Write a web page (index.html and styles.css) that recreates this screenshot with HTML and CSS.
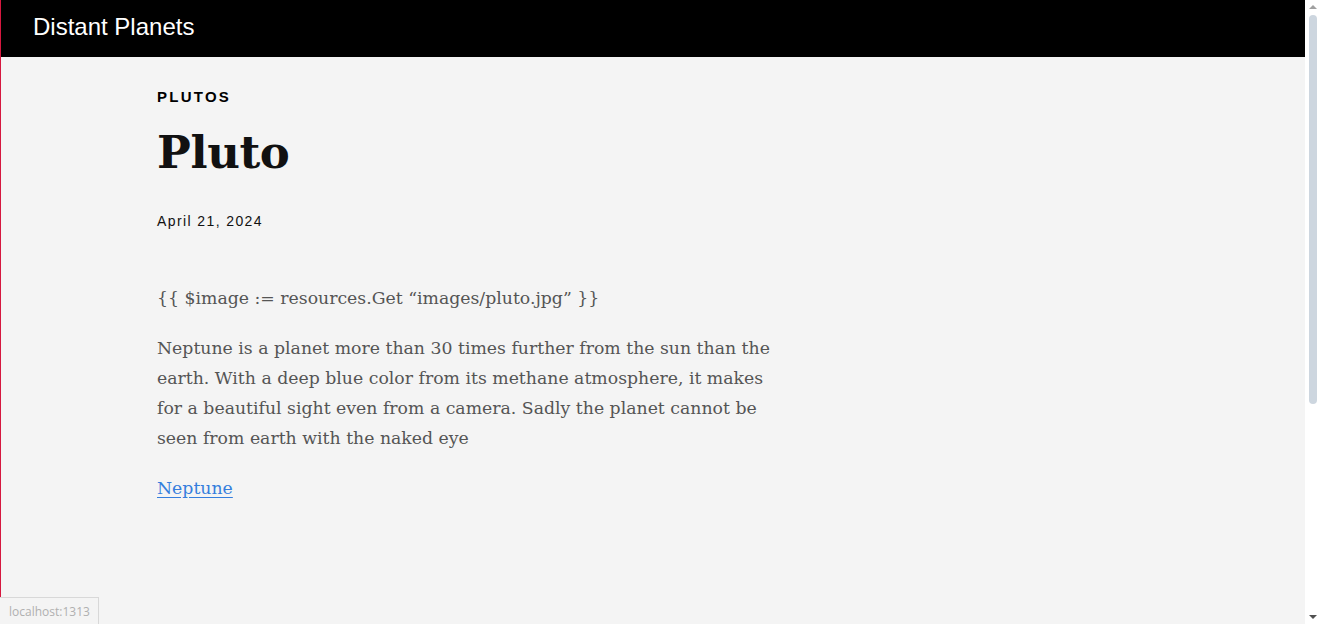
FILE: index.html
```html
<!DOCTYPE html>
<html lang="en">
<head>
<meta charset="utf-8">
<title>Pluto | Distant Planets</title>
<link rel="stylesheet" href="styles.css">
</head>
<body>
<div class="window">
  <div class="page">
    <header class="site-header">
      <a class="site-title" href="#">Distant Planets</a>
    </header>
    <main class="main">
      <article class="article">
        <div class="article-head">
          <p class="kicker">PLUTOS</p>
          <h1 class="title">Pluto</h1>
          <time class="date">April 21, 2024</time>
        </div>
        <div class="content">
          <p>{{ $image := resources.Get “images/pluto.jpg” }}</p>
          <p>Neptune is a planet more than 30 times further from the sun than the earth. With a deep blue color from its methane atmosphere, it makes for a beautiful sight even from a camera. Sadly the planet cannot be seen from earth with the naked eye</p>
          <p><a href="#">Neptune</a></p>
        </div>
      </article>
    </main>
  </div>
  <div class="scrollbar">
    <span class="arrow up"></span>
    <div class="track"><div class="thumb"></div></div>
    <span class="arrow down"></span>
  </div>
</div>
<div class="status">localhost:1313</div>
</body>
</html>
```
FILE: styles.css
```css
* { box-sizing: border-box; }
html, body { margin: 0; padding: 0; height: 100%; overflow: hidden; }
body { background: #f4f4f4; font-family: "Liberation Sans", Arial, sans-serif; }

.window {
  display: flex;
  height: 624px;
  border-left: 1px solid #d6183f;
}
.page { flex: 1; min-width: 0; background: #f4f4f4; }

.site-header {
  background: #000;
  height: 57px;
  display: flex;
  align-items: center;
  padding: 0 32px 4px;
}
.site-title {
  color: #fff;
  text-decoration: none;
  font-family: "Liberation Sans", Arial, sans-serif;
  font-size: 24px;
  line-height: 28px;
}

.main { padding: 0 16px; }
.article { max-width: 992px; margin: 0 auto; }

.article-head { padding-top: 30px; }
.kicker {
  margin: 0;
  font-size: 15px;
  line-height: 20px;
  font-weight: bold;
  letter-spacing: 0.15em;
  color: #000;
}
.title {
  margin: 16px 0 0;
  font-family: "DejaVu Serif", Georgia, serif;
  font-size: 45px;
  line-height: 60px;
  font-weight: bold;
  color: #111;
  letter-spacing: -0.4px;
}
.date {
  display: block;
  margin-top: 30px;
  font-size: 14px;
  line-height: 16px;
  letter-spacing: 0.1em;
  color: #111;
}

.content {
  width: 629px;
  margin-top: 54px;
  font-family: "DejaVu Serif", Georgia, serif;
  font-size: 17.3px;
  line-height: 30px;
  color: #555;
}
.content p { margin: 0 0 20px; }
.content a { color: #357edd; text-decoration: underline; text-underline-offset: 3px; }

.scrollbar {
  width: 15px;
  background: #fff;
  display: flex;
  flex-direction: column;
  align-items: center;
}
.track { flex: 1; width: 100%; display: flex; justify-content: center; padding-top: 1px; }
.thumb { width: 8px; height: 389px; background: #cdd6df; border-radius: 4px; }
.arrow {
  width: 0; height: 0;
  margin: 5px 0;
  border-left: 4px solid transparent;
  border-right: 4px solid transparent;
}
.arrow.up { border-bottom: 4px solid #a0a0a0; }
.arrow.down { border-top: 4px solid #505050; }

.status {
  position: fixed;
  left: 0;
  bottom: 0;
  width: 99px;
  height: 27px;
  padding: 5px 0 0 9px;
  background: #f4f4f4;
  border: 1px solid #d8d8d8;
  border-left: none;
  border-bottom: none;
  font-family: "Open Sans", "Liberation Sans", sans-serif;
  font-size: 12px;
  color: #b0b0b0;
}
```
